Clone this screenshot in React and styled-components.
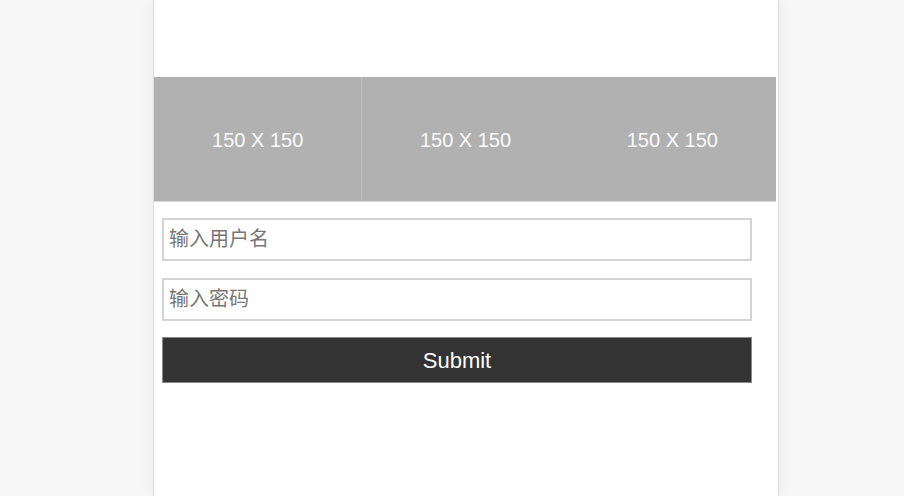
import React from "react";
import styled, { createGlobalStyle } from "styled-components";

const Global = createGlobalStyle`
  html, body { margin: 0; padding: 0; background: #f7f7f7; }
  body { font-family: "Liberation Sans", Arial, sans-serif; overflow: hidden; }
`;

const Page = styled.div`
  width: 626px;
  margin-left: 153px;
  min-height: 496px;
  box-sizing: border-box;
  background: #fff;
  border-left: 1px solid #dcdcdc;
  border-right: 1px solid #dcdcdc;
  box-shadow: 0 0 14px rgba(0, 0, 0, 0.06);
  padding-top: 77px;
`;

const Banner = styled.div`
  width: 622px;
  height: 125px;
  display: grid;
  grid-template-columns: repeat(3, 1fr);
  background: #b1b1b1;
  border-bottom: 1px solid #d8d8d8;
  box-sizing: border-box;
`;

const Cell = styled.div`
  display: flex;
  align-items: center;
  justify-content: center;
  padding-top: 2px;
  color: #fafafa;
  font-size: 20px;
  border-left: ${(p) => (p.$divider ? "1px solid #bdbdbd" : "none")};
`;

const Form = styled.form`
  display: flex;
  flex-direction: column;
  gap: 17px;
  padding: 16px 0 0 8px;
`;

const Input = styled.input`
  width: 590px;
  height: 43px;
  box-sizing: border-box;
  border: 2px solid #d4d4d4;
  padding: 0 5px;
  font-size: 20px;
  font-family: "Liberation Sans", "Noto Sans CJK SC", sans-serif;
  color: #333;
  outline: none;
  &::placeholder { color: #777; }
`;

const Button = styled.button`
  width: 590px;
  height: 46px;
  margin-top: -1px;
  padding: 2px 0 0;
  background: #333;
  border: 1px solid #8a8a8a;
  color: #fff;
  font-size: 22px;
  font-family: "Liberation Sans", Arial, sans-serif;
`;

export default function App() {
  return (
    <>
      <Global />
      <Page>
        <Banner>
          <Cell>150 X 150</Cell>
          <Cell $divider>150 X 150</Cell>
          <Cell>150 X 150</Cell>
        </Banner>
        <Form onSubmit={(e) => e.preventDefault()}>
          <Input placeholder="输入用户名" />
          <Input type="password" placeholder="输入密码" />
          <Button type="submit">Submit</Button>
        </Form>
      </Page>
    </>
  );
}
